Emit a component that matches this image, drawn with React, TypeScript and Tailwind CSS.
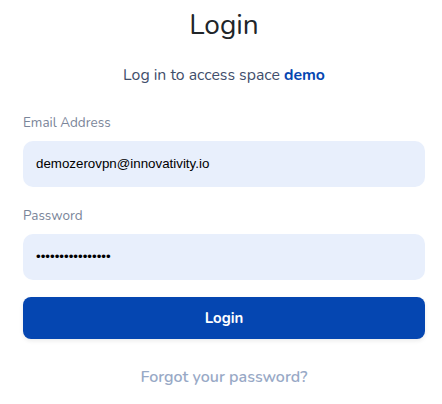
import React from "react";

export default function App() {
  return (
    <div className="w-[442px] h-[404px] bg-white" style={{ fontFamily: '"Nunito", "Open Sans", "Noto Sans", sans-serif' }}>
      <div className="flex flex-col pl-[23px] pr-[17px] pt-[6px]">
        <h1 className="text-center text-[28px] leading-[38px] text-[#212529] font-normal">Login</h1>
        <p className="mt-[21px] text-center text-[15.8px] leading-[20px] text-[#3f4e6b]">
          Log in to access space <span className="font-bold text-[#0546b1]">demo</span>
        </p>
        <label className="mt-[29px] text-[13.5px] leading-[18px] text-[#7a8599]">Email Address</label>
        <div className="mt-[9px] h-[46px] rounded-[10px] bg-[#e8effc] flex items-center px-[13px]">
          <span className="text-[13.333px] text-black" style={{ fontFamily: '"Liberation Sans", Arial, sans-serif' }}>demozerovpn@innovativity.io</span>
        </div>
        <label className="mt-[20px] text-[13.5px] leading-[18px] text-[#7a8599]">Password</label>
        <div className="mt-[9px] h-[46px] rounded-[10px] bg-[#e8effc] flex items-center px-[13px]">
          <span className="text-[13.333px] text-black" style={{ fontFamily: '"Liberation Sans", Arial, sans-serif' }}>••••••••••••••••</span>
        </div>
        <button className="mt-[17px] h-[42px] rounded-[8px] bg-[#0546b1] text-white text-[15px] font-bold shadow-[0_2px_4px_rgba(0,0,0,0.08)]">Login</button>
        <p className="mt-[26px] text-center text-[16px] font-semibold text-[#98a9c6]">Forgot your password?</p>
      </div>
    </div>
  );
}
